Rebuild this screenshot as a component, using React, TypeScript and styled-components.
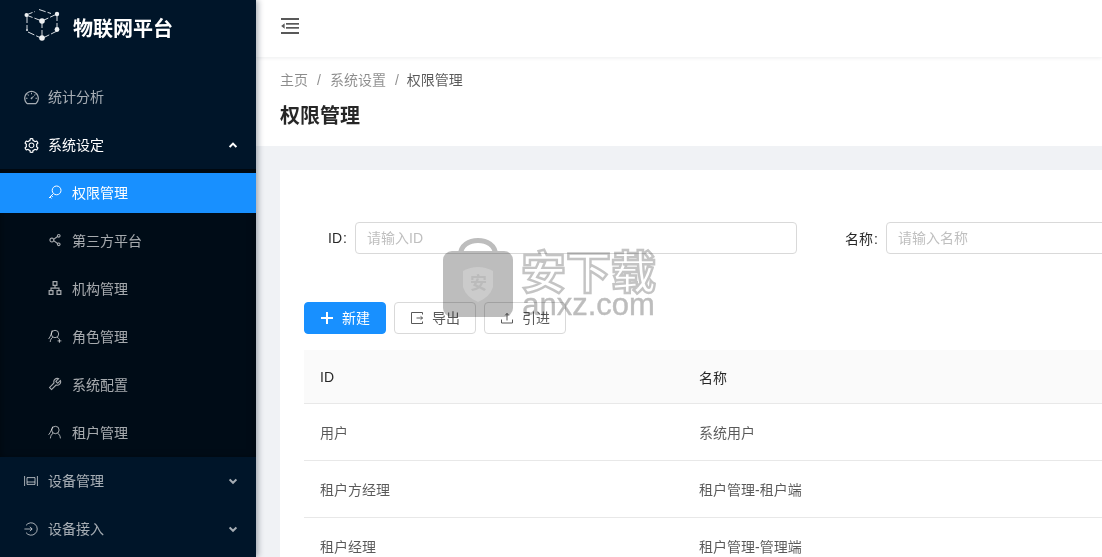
import React from "react";
import styled, { createGlobalStyle } from "styled-components";
import {
  AiOutlineDashboard,
  AiOutlineSetting,
  AiOutlineShareAlt,
  AiOutlineApartment,
  AiOutlineTool,
} from "react-icons/ai";

const GlobalStyle = createGlobalStyle`
  html, body {
    margin: 0;
    padding: 0;
    height: 100%;
    overflow: hidden;
    background: #f0f2f5;
    font-family: "Liberation Sans", "Noto Sans CJK SC", sans-serif;
    font-size: 14px;
  }
  * { box-sizing: border-box; }
`;

const LogoIcon = () => (
  <svg width="38" height="34" viewBox="0 0 38 34" fill="none" stroke="#d8dde2" strokeWidth="1">
    <path d="M2 7 L11 3.5 M15 1.5 L27 5.5 M2 7 L18 13 M18 13 L33 6 M33 6 V22 M18 13 V30 M3 8 V21 M4 24 L17 30 M19 30 L33 23" strokeDasharray="7 2" />
    <g fill="#eef1f3" stroke="none">
      <circle cx="2.5" cy="7" r="2" />
      <circle cx="18" cy="13" r="2.8" />
      <circle cx="33" cy="6" r="2.2" />
      <circle cx="33" cy="21.5" r="2.4" />
      <circle cx="18" cy="30" r="2.8" />
      <circle cx="3" cy="22" r="1" />
    </g>
  </svg>
);

const Line = ({ children }: { children: React.ReactNode }) => (
  <svg width="14" height="14" viewBox="0 0 14 14" fill="none" stroke="currentColor" strokeWidth="1">
    {children}
  </svg>
);

const KeyIcon = () => (
  <Line>
    <circle cx="8.6" cy="5.4" r="4.4" />
    <path d="M5.4 8.6 L1 13 M2 12 L3.5 13.4 M3.4 10.6 L4.8 12" />
  </Line>
);

const RoleIcon = () => (
  <Line>
    <circle cx="7" cy="5" r="3.7" />
    <path d="M4.2 1.4 C3.4 4 2.8 7.4 0.6 10 M4.8 8.2 C3.4 9 2.4 10.6 2.2 13 M9.2 8.2 C10 8.6 10.6 9.2 11 9.8 M11.4 10 V13.8 M9.5 11.9 H13.4" />
  </Line>
);

const TenantIcon = () => (
  <Line>
    <circle cx="7.4" cy="5" r="3.7" />
    <path d="M4.8 1.6 C3.6 4 3 7 0.6 9.8 M5.2 8.2 C3.4 9.2 2.6 11 2.4 13.4 M9.6 8.2 C11.4 9.2 12.2 11 12.4 13.4" />
  </Line>
);

const DeviceIcon = () => (
  <Line>
    <path d="M0.6 2 V12 M13.4 2 V12 M3 3.6 H11 V10.4 H3 Z M3 8 H11" />
  </Line>
);

const AccessIcon = () => (
  <Line>
    <path d="M2 3.4 A6.2 6.2 0 1 1 2 10.6 M0.4 7 H8 M5.8 4.8 L8.2 7 L5.8 9.2" />
  </Line>
);

const Chevron = ({ up }: { up?: boolean }) => (
  <svg width="8" height="8" viewBox="0 0 8 8" fill="none" stroke="currentColor" strokeWidth="2">
    <path d={up ? "M0.6 6 L4 2.6 L7.4 6" : "M0.6 2.4 L4 5.8 L7.4 2.4"} />
  </svg>
);

const FoldIcon = () => (
  <svg width="18" height="16" viewBox="0 0 18 16" fill="#595959">
    <rect x="0" y="0" width="18" height="2" />
    <rect x="5" y="5" width="13" height="1.7" />
    <rect x="5" y="9" width="13" height="1.7" />
    <rect x="0" y="14" width="18" height="2" />
    <path d="M0.2 8 L3.6 5.2 V10.8 Z" />
  </svg>
);

const PlusIcon = () => (
  <svg width="14" height="14" viewBox="0 0 14 14" fill="none" stroke="#fff" strokeWidth="2">
    <path d="M7 1 V13 M1 7 H13" />
  </svg>
);

const ExportIcon = () => (
  <svg width="14" height="14" viewBox="0 0 14 14" fill="none" stroke="#595959" strokeWidth="1">
    <path d="M12.5 3.5 V1.5 H1.5 V12.5 H12.5 V10.5 M6.5 7 H12.5 M10.6 5.4 L12.6 7 L10.6 8.6" />
  </svg>
);

const ImportIcon = () => (
  <svg width="14" height="14" viewBox="0 0 14 14" fill="none" stroke="#595959" strokeWidth="1">
    <path d="M1.5 8.5 V12 H12.5 V8.5 M7 9.5 V2.5 M5.2 4.4 L7 2.4 L8.8 4.4" />
  </svg>
);

const subMenu = [
  { label: "权限管理", icon: <KeyIcon />, active: true },
  { label: "第三方平台", icon: <AiOutlineShareAlt size={16} /> },
  { label: "机构管理", icon: <AiOutlineApartment size={16} /> },
  { label: "角色管理", icon: <RoleIcon /> },
  { label: "系统配置", icon: <AiOutlineTool size={16} /> },
  { label: "租户管理", icon: <TenantIcon /> },
];

const rows = [
  ["用户", "系统用户"],
  ["租户方经理", "租户管理-租户端"],
  ["租户经理", "租户管理-管理端"],
];

export default function App() {
  return (
    <>
      <GlobalStyle />
      <Layout>
        <Sider>
          <Logo>
            <LogoIcon />
            <LogoText>物联网平台</LogoText>
          </Logo>
          <Menu>
            <MenuItem>
              <IconBox>
                <AiOutlineDashboard size={17} />
              </IconBox>
              <span>统计分析</span>
            </MenuItem>
            <MenuItem $open>
              <IconBox>
                <AiOutlineSetting size={17} />
              </IconBox>
              <span>系统设定</span>
              <Arrow>
                <Chevron up />
              </Arrow>
            </MenuItem>
            <SubMenu>
              {subMenu.map((item) => (
                <SubItem key={item.label} $active={item.active}>
                  <IconBox>{item.icon}</IconBox>
                  <span>{item.label}</span>
                </SubItem>
              ))}
            </SubMenu>
            <MenuItem>
              <IconBox>
                <DeviceIcon />
              </IconBox>
              <span>设备管理</span>
              <Arrow>
                <Chevron />
              </Arrow>
            </MenuItem>
            <MenuItem>
              <IconBox>
                <AccessIcon />
              </IconBox>
              <span>设备接入</span>
              <Arrow>
                <Chevron />
              </Arrow>
            </MenuItem>
          </Menu>
        </Sider>
        <Main>
          <TopBar>
            <FoldIcon />
          </TopBar>
          <PageHeader>
            <Breadcrumb>
              <span>主页</span>
              <Sep>/</Sep>
              <span>系统设置</span>
              <Sep>/</Sep>
              <Current>权限管理</Current>
            </Breadcrumb>
            <Title>权限管理</Title>
          </PageHeader>
          <Content>
            <Card>
              <SearchForm>
                <Field>
                  <FieldLabel>
                    ID<Colon>:</Colon>
                  </FieldLabel>
                  <Input placeholder="请输入ID" />
                </Field>
                <Field>
                  <FieldLabel>
                    名称<Colon>:</Colon>
                  </FieldLabel>
                  <Input placeholder="请输入名称" />
                </Field>
              </SearchForm>
              <Actions>
                <Button $primary>
                  <PlusIcon />
                  <span>新建</span>
                </Button>
                <Button>
                  <ExportIcon />
                  <span>导出</span>
                </Button>
                <Button>
                  <ImportIcon />
                  <span>引进</span>
                </Button>
              </Actions>
              <Table>
                <thead>
                  <tr>
                    <Th $w={379}>ID</Th>
                    <Th>名称</Th>
                  </tr>
                </thead>
                <tbody>
                  {rows.map((row) => (
                    <tr key={row[0]}>
                      <Td>{row[0]}</Td>
                      <Td>{row[1]}</Td>
                    </tr>
                  ))}
                </tbody>
              </Table>
            </Card>
          </Content>
        </Main>
        <Watermark>
          <LockBadge>
            <svg width="72" height="80" viewBox="0 0 72 80">
              <path d="M17.5 18 C17.5 -1.5 52.5 -1.5 52.5 18" fill="none" stroke="#bdbdbd" strokeWidth="5" />
              <rect x="0" y="14" width="70" height="66" rx="9" fill="#bdbdbd" />
              <path d="M20 34 Q35 26 50 34 V50 Q47 60 35 65 Q23 60 20 50 Z" fill="#cbcbcb" />
            </svg>
            <ShieldText>安</ShieldText>
          </LockBadge>
          <MarkText>
            <MarkTitle>安下载</MarkTitle>
            <MarkSite>anxz.com</MarkSite>
          </MarkText>
        </Watermark>
      </Layout>
    </>
  );
}

const Layout = styled.div`
  position: relative;
  display: flex;
  width: 1102px;
  height: 557px;
  overflow: hidden;
`;

const Sider = styled.aside`
  flex: 0 0 256px;
  height: 557px;
  background: #001529;
  box-shadow: 2px 0 6px rgba(0, 21, 41, 0.35);
  position: relative;
  z-index: 2;
`;

const Logo = styled.div`
  display: flex;
  align-items: flex-start;
  gap: 11px;
  height: 73px;
  padding: 8px 0 0 24px;
`;

const LogoText = styled.div`
  color: #fff;
  font-size: 20px;
  font-weight: 700;
  line-height: 28px;
  margin-top: 7px;
`;

const Menu = styled.nav`
  display: flex;
  flex-direction: column;
`;

const IconBox = styled.span`
  display: flex;
  flex: 0 0 14px;
  align-items: center;
  justify-content: center;
  width: 14px;
  height: 14px;
  svg {
    flex-shrink: 0;
  }
`;

const MenuItem = styled.div<{ $open?: boolean }>`
  display: flex;
  align-items: center;
  gap: 10px;
  height: 40px;
  margin: 4px 0;
  padding: 0 19px 0 24px;
  color: ${(p) => (p.$open ? "#fff" : "rgba(255, 255, 255, 0.65)")};
  font-size: 14px;
  line-height: 40px;
`;

const Arrow = styled.span`
  display: flex;
  margin-left: auto;
`;

const SubMenu = styled.div`
  display: flex;
  flex-direction: column;
  background: #000c17;
  box-shadow: inset 0 2px 8px rgba(0, 0, 0, 0.45);
`;

const SubItem = styled.div<{ $active?: boolean }>`
  display: flex;
  align-items: center;
  gap: 10px;
  height: 40px;
  margin: 4px 0;
  padding: 0 0 2px 48px;
  background: ${(p) => (p.$active ? "#1890ff" : "transparent")};
  color: ${(p) => (p.$active ? "#fff" : "rgba(255, 255, 255, 0.65)")};
`;

const Main = styled.main`
  flex: 1;
  min-width: 0;
  display: flex;
  flex-direction: column;
`;

const TopBar = styled.header`
  display: flex;
  align-items: center;
  flex: 0 0 57px;
  padding: 0 0 5px 25px;
  background: #fff;
  box-shadow: 0 1px 4px rgba(0, 21, 41, 0.08);
  position: relative;
`;

const PageHeader = styled.div`
  flex: 0 0 89px;
  padding: 14px 24px 0;
  background: #fff;
`;

const Breadcrumb = styled.div`
  display: flex;
  color: rgba(0, 0, 0, 0.45);
  line-height: 18px;
`;

const Sep = styled.span`
  margin: 0 9px;
`;

const Current = styled.span`
  color: rgba(0, 0, 0, 0.65);
  margin-left: -1px;
`;

const Title = styled.h1`
  margin: 13px 0 0;
  color: rgba(0, 0, 0, 0.85);
  font-size: 20px;
  font-weight: 600;
  line-height: 28px;
`;

const Content = styled.div`
  flex: 1;
  padding: 24px 0 0 24px;
  background: #f0f2f5;
`;

const Card = styled.section`
  width: 900px;
  height: 420px;
  padding: 52px 24px 0;
  background: #fff;
`;

const SearchForm = styled.div`
  display: grid;
  grid-template-columns: 493px 1fr;
  gap: 48px;
  width: 1000px;
`;

const Field = styled.div`
  display: flex;
  align-items: center;
  justify-content: flex-end;
  gap: 8px;
`;

const FieldLabel = styled.label`
  color: rgba(0, 0, 0, 0.85);
  white-space: nowrap;
`;

const Colon = styled.span`
  margin-left: 1px;
`;

const Input = styled.input`
  flex: 0 0 442px;
  height: 32px;
  padding: 0 11px;
  border: 1px solid #d9d9d9;
  border-radius: 4px;
  font: inherit;
  outline: none;
  &::placeholder {
    color: #bfbfbf;
  }
`;

const Actions = styled.div`
  display: flex;
  gap: 8px;
  margin-top: 48px;
`;

const Button = styled.button<{ $primary?: boolean }>`
  display: flex;
  align-items: center;
  justify-content: center;
  gap: 8px;
  width: 82px;
  height: 32px;
  padding: 0;
  border: 1px solid ${(p) => (p.$primary ? "#1890ff" : "#d9d9d9")};
  border-radius: 4px;
  background: ${(p) => (p.$primary ? "#1890ff" : "#fff")};
  color: ${(p) => (p.$primary ? "#fff" : "rgba(0, 0, 0, 0.65)")};
  font: inherit;
  span {
    position: relative;
    top: -1px;
  }
`;

const Table = styled.table`
  width: 852px;
  margin-top: 16px;
  border-collapse: collapse;
`;

const Th = styled.th<{ $w?: number }>`
  width: ${(p) => (p.$w ? `${p.$w}px` : "auto")};
  height: 53px;
  padding: 2px 16px 0;
  background: #fafafa;
  border-bottom: 1px solid #e8e8e8;
  color: rgba(0, 0, 0, 0.85);
  font-weight: 400;
  text-align: left;
`;

const Td = styled.td`
  height: 57px;
  padding: 0 16px;
  border-bottom: 1px solid #e8e8e8;
  color: rgba(0, 0, 0, 0.65);
`;

const Watermark = styled.div`
  position: absolute;
  left: 443px;
  top: 237px;
  z-index: 3;
  display: flex;
  gap: 6px;
  mix-blend-mode: multiply;
  pointer-events: none;
`;

const LockBadge = styled.div`
  position: relative;
  width: 72px;
  height: 80px;
`;

const ShieldText = styled.span`
  position: absolute;
  left: 27px;
  top: 38px;
  color: #bbbbbb;
  font-size: 17px;
  font-weight: 700;
  line-height: 17px;
`;

const MarkText = styled.div`
  display: flex;
  flex-direction: column;
  padding-top: 17px;
`;

const MarkTitle = styled.div`
  color: #fff;
  -webkit-text-stroke: 2.4px #c4c4c4;
  font-size: 45px;
  font-weight: 700;
  line-height: 39px;
  white-space: nowrap;
`;

const MarkSite = styled.div`
  color: #bdbdbd;
  -webkit-text-stroke: 0.4px #bdbdbd;
  font-family: "Liberation Sans", sans-serif;
  font-size: 31px;
  line-height: 24px;
  text-align: center;
`;
